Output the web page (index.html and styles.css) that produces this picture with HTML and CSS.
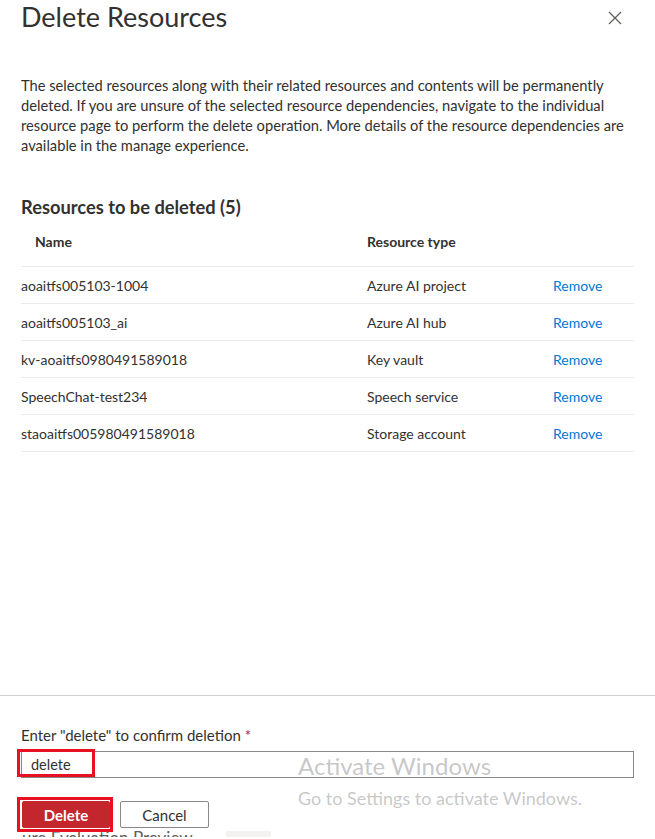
FILE: index.html
```html
<!DOCTYPE html>
<html lang="en">
<head>
<meta charset="utf-8">
<title>Delete Resources</title>
<link rel="stylesheet" href="styles.css">
</head>
<body>
<div class="panel">
  <div class="body">
    <div class="head">
      <h1 class="title">Delete Resources</h1>
      <button class="close" aria-label="Close">
        <svg width="14" height="14" viewBox="0 0 14 14"><path d="M1 1L13 13M13 1L1 13" stroke="#605e5c" stroke-width="1.3" fill="none"/></svg>
      </button>
    </div>
    <p class="desc">The selected resources along with their related resources and contents will be permanently deleted. If you are unsure of the selected resource dependencies, navigate to the individual resource page to perform the delete operation. More details of the resource dependencies are available in the manage experience.</p>
    <h2 class="subtitle">Resources to be deleted (5)</h2>
    <div class="table">
      <div class="row thead">
        <div class="c-name">Name</div>
        <div class="c-type">Resource type</div>
        <div class="c-act"></div>
      </div>
      <div class="row">
        <div class="c-name">aoaitfs005103-1004</div>
        <div class="c-type">Azure AI project</div>
        <div class="c-act"><a class="link">Remove</a></div>
      </div>
      <div class="row">
        <div class="c-name">aoaitfs005103_ai</div>
        <div class="c-type">Azure AI hub</div>
        <div class="c-act"><a class="link">Remove</a></div>
      </div>
      <div class="row">
        <div class="c-name">kv-aoaitfs0980491589018</div>
        <div class="c-type">Key vault</div>
        <div class="c-act"><a class="link">Remove</a></div>
      </div>
      <div class="row">
        <div class="c-name">SpeechChat-test234</div>
        <div class="c-type">Speech service</div>
        <div class="c-act"><a class="link">Remove</a></div>
      </div>
      <div class="row last">
        <div class="c-name">staoaitfs005980491589018</div>
        <div class="c-type">Storage account</div>
        <div class="c-act"><a class="link">Remove</a></div>
      </div>
    </div>
  </div>
  <div class="footer">
    <label class="label">Enter "delete" to confirm deletion <span class="req">*</span></label>
    <div class="input-wrap">
      <div class="input">delete</div>
      <div class="mark mark-input"></div>
    </div>
    <div class="buttons">
      <div class="btn-wrap">
        <button class="btn btn-danger">Delete</button>
        <div class="mark mark-btn"></div>
      </div>
      <button class="btn btn-default">Cancel</button>
    </div>
    <div class="strip"><span class="strip-text">ure Evaluation Preview</span></div>
    <div class="watermark">
      <div class="wm-1">Activate Windows</div>
      <div class="wm-2">Go to Settings to activate Windows.</div>
    </div>
  </div>
</div>
</body>
</html>
```
FILE: styles.css
```css
* { box-sizing: border-box; }
html, body { margin: 0; padding: 0; background: #fff; }
body {
  font-family: Lato, "Noto Sans", sans-serif;
  color: #323130;
  font-size: 14px;
}
.panel {
  width: 655px;
  height: 839px;
  display: flex;
  flex-direction: column;
  overflow: hidden;
}
.body {
  flex: 1;
  padding: 0 21px;
}
.head {
  display: flex;
  justify-content: space-between;
  align-items: flex-start;
  height: 34px;
}
.title {
  margin: 0;
  font-size: 27px;
  font-weight: 400;
  line-height: 34px;
  color: #323130;
}
.close {
  border: 0;
  background: transparent;
  padding: 0;
  margin: 11px 12px 0 0;
  width: 14px;
  height: 14px;
  display: flex;
}
.desc {
  margin: 41px 0 0;
  line-height: 20px;
  font-size: 14.7px;
}
.subtitle {
  margin: 40px 0 0;
  font-size: 18.3px;
  font-weight: 700;
  line-height: 24px;
}
.table { margin-top: 0; }
.row {
  display: flex;
  align-items: center;
  height: 37px;
  border-top: 1px solid #edebe9;
}
.row.last { border-bottom: 1px solid #edebe9; height: 38px; }
.row.thead {
  border-top: 0;
  height: 47px;
  font-weight: 700;
  align-items: flex-start;
  padding-top: 14px;
}
.thead .c-name { padding-left: 14px; }
.c-name { width: 346px; }
.c-type { width: 186px; }
.c-act { flex: 1; }
.link { color: #0078d4; cursor: pointer; }
.footer {
  position: relative;
  border-top: 1px solid #d2d0ce;
  padding: 29px 21px 0;
  height: 144px;
}
.label {
  display: block;
  line-height: 20px;
  font-size: 15px;
}
.req { color: #a4262c; }
.input-wrap {
  position: relative;
  margin-top: 6px;
}
.input {
  height: 27px;
  border: 1px solid #8a8886;
  padding: 0 9px;
  line-height: 25px;
  font-size: 14.5px;
}
.mark {
  position: absolute;
  border: 3px solid #e81123;
}
.mark-input { left: -4px; top: -2px; width: 78px; height: 28px; }
.buttons {
  display: flex;
  align-items: center;
  gap: 10px;
  margin-top: 23px;
}
.btn-wrap { position: relative; }
.btn {
  height: 27px;
  font-family: inherit;
  font-size: 15px;
  border-radius: 2px;
  padding: 0;
}
.btn-danger {
  width: 88px;
  margin-left: 1px;
  background: #c4262e;
  color: #fff;
  border: 1px solid #c4262e;
  font-weight: 700;
}
.btn-default {
  width: 89px;
  background: #fff;
  color: #323130;
  border: 1px solid #8a8886;
}
.mark-btn { left: -4px; top: -4px; width: 96px; height: 35px; }
.strip {
  height: 6px;
  margin: 3px 0 0 0;
  overflow: hidden;
  width: 250px;
  background: linear-gradient(to right, #fff 0, #fff 205px, #f3f2f1 205px, #f3f2f1 250px);
}
.strip-text {
  display: block;
  color: #605e5c;
  font-size: 17px;
  line-height: 20px;
  margin-top: -3px;
  padding-left: 1px;
}
.watermark {
  position: absolute;
  left: 298px;
  top: 55px;
  color: rgba(120,120,120,0.42);
  pointer-events: none;
}
.wm-1 { font-size: 24px; line-height: 30px; }
.wm-2 { font-size: 18px; line-height: 22px; margin-top: 6px; }
```
